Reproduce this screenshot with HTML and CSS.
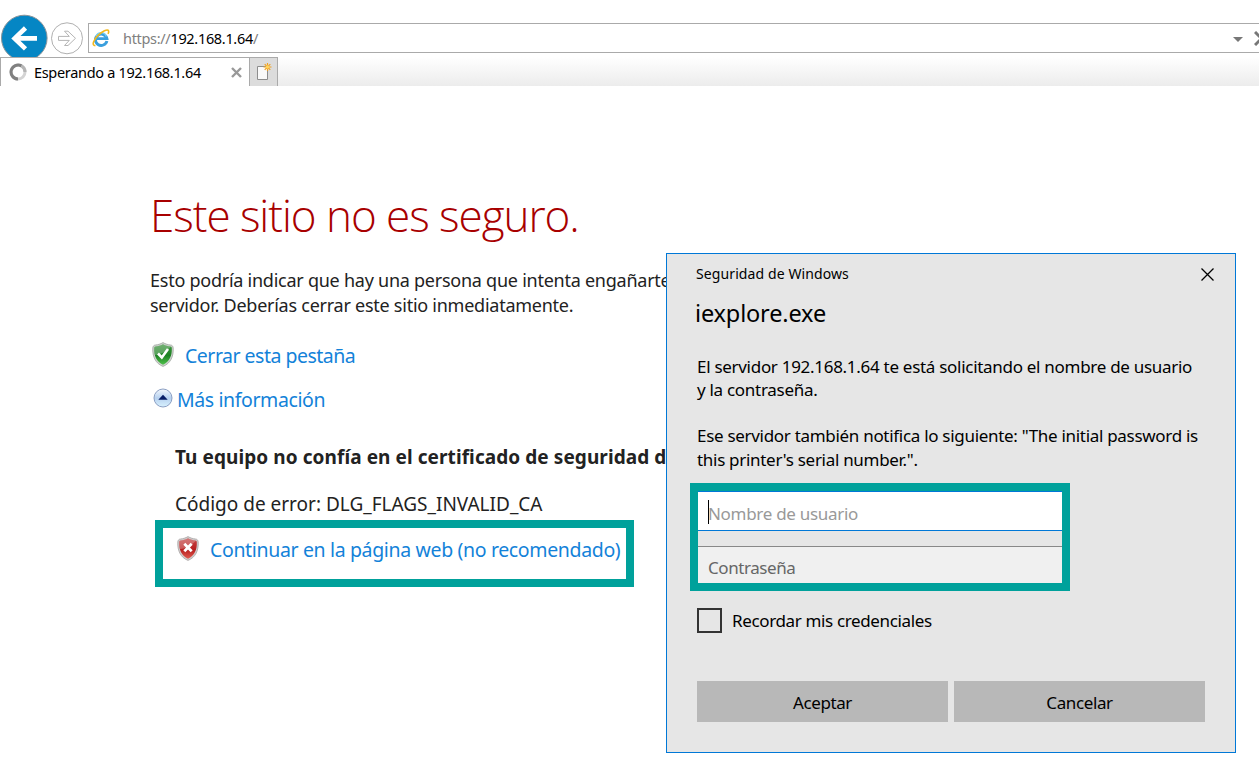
FILE: index.html
```html
<!DOCTYPE html>
<html lang="es">
<head>
<meta charset="utf-8">
<title>Este sitio no es seguro</title>
<link rel="stylesheet" href="styles.css">
</head>
<body>
<header class="chrome">
  <div class="navbar">
    <svg class="back" width="50" height="57" viewBox="0 0 50 57"><circle cx="24.3" cy="38" r="22.8" fill="#0586c4" stroke="#8b9398" stroke-width="1"/><path d="M37 38.400H15.500M25.500 28L14.600 38.400 25.500 48.800" fill="none" stroke="#fff" stroke-width="4.600"/></svg>
    <svg class="forward" width="34" height="57" viewBox="0 0 34 57"><circle cx="17" cy="38.300" r="15.500" fill="#fff" stroke="#b0b0b0"/><path d="M8.500 36.400H19.300L14.500 31.200H18L25.500 38.300 18 45.500H14.500L19.300 40.400H8.500Z" fill="#fff" stroke="#b5b5b5"/></svg>
    <div class="address">
      <svg class="ie" width="18" height="18" viewBox="0 0 18 18"><path d="M14.900 12A5.800 5.600 0 1 1 14.900 9.600H5" fill="none" stroke="#3a9fdd" stroke-width="2.900"/><path d="M14.300 7.500A5.400 5.400 0 0 0 4 7.500" fill="none" stroke="#7bd0f4" stroke-width="1.200"/><path d="M3.400 16.700C-.8 16.400 1.600 10.800 5.800 6.600 9.900 2.600 15.800-.6 16.600 1.900 16.900 2.900 16.500 4 16 4.900" fill="none" stroke="#f2b81c" stroke-width="1.600"/></svg>
      <span class="url">https://<b>192.168.1.64</b>/</span>
      <svg class="caret" width="10" height="5" viewBox="0 0 10 5"><path d="M0 0H10L5 5Z" fill="#777"/></svg>
      <svg class="stop" width="15" height="15" viewBox="0 0 15 15"><path d="M1 1L14 14M14 1L1 14" stroke="#777" stroke-width="3"/></svg>
    </div>
  </div>
  <div class="tabs">
    <div class="tab">
      <svg width="18" height="18" viewBox="0 0 18 18" fill="none" stroke-width="3"><circle cx="9" cy="9" r="7" stroke="#d4d4d4"/><path d="M9 16A7 7 0 1 1 12.500 2.900" stroke="#808080"/><path d="M12.500 2.900A7 7 0 0 1 16 9" stroke="#b5b5b5"/></svg>
      <span class="tab-title">Esperando a 192.168.1.64</span>
      <svg class="tab-close" width="11" height="11" viewBox="0 0 11 11"><path d="M1 1L10 10M10 1L1 10" stroke="#999" stroke-width="2.400"/></svg>
    </div>
    <div class="new-tab"><svg width="16" height="18" viewBox="0 0 16 18"><path d="M1.500 3.500H11.500V16.500H1.500Z" fill="#fafafa" stroke="#8d8d8d"/><path d="M11.500 0V8M7.500 4H15.500M8.700 1.200L14.300 6.800M14.300 1.200L8.700 6.800" stroke="#f0a020" stroke-width="1.200"/><circle cx="11.500" cy="4" r="1.800" fill="#ffd35a"/></svg></div>
  </div>
</header>
<main class="page">
  <h1>Este sitio no es seguro.</h1>
  <p class="intro">Esto podría indicar que hay una persona que intenta engañarte<br>servidor. Deberías cerrar este sitio inmediatamente.</p>
  <div class="action close-tab">
    <svg width="22" height="25" viewBox="0 0 22 25"><defs><linearGradient id="green" x2="0" y2="1"><stop stop-color="#3f9440"/><stop offset=".55" stop-color="#1c8222"/><stop offset="1" stop-color="#4fc24a"/></linearGradient></defs><path d="M11 .6C13.500 2 16 2.800 18.500 3 20.300 3.200 21 4.200 21.200 6 21.700 14.500 18.500 21.500 11 24.400 3.500 21.500.3 14.500.8 6 1 4.200 1.700 3.200 3.500 3 6 2.800 8.500 2 11 .6Z" fill="#cdd2cd" stroke="#a0a6a0" stroke-width=".8"/><path d="M11 2.300C13.500 3.700 16 4.400 18.400 4.500 19.400 4.600 19.700 5.200 19.800 6.300 20.200 14 17.300 20 11 22.800 4.700 20 1.800 14 2.200 6.300 2.300 5.200 2.600 4.600 3.600 4.500 6 4.400 8.500 3.700 11 2.300Z" fill="url(#green)"/><path d="M11 2.300C8.500 3.700 6 4.400 3.600 4.500 2.600 4.600 2.300 5.200 2.200 6.300 2.100 9 2.300 11 3 13 9 12.500 15 9 19 4.700 16 4.400 13.500 3.700 11 2.300Z" fill="#fff" opacity=".25"/><path d="M6 11.500L9.800 15.500 16 7" fill="none" stroke="#fff" stroke-width="2.600"/></svg>
    <a>Cerrar esta pestaña</a>
  </div>
  <div class="action more">
    <svg width="20" height="20" viewBox="0 0 20 20"><defs><linearGradient id="orb" x2="0" y2="1"><stop stop-color="#f4f8fd"/><stop offset=".5" stop-color="#b7d1ef"/><stop offset="1" stop-color="#d8f1fe"/></linearGradient></defs><circle cx="10" cy="10" r="9" fill="url(#orb)" stroke="#8b9fc3" stroke-width="1"/><path d="M5.300 11.800L10 6.800 14.700 11.800Z" fill="#071c66"/></svg>
    <a>Más información</a>
  </div>
  <p class="reason">Tu equipo no confía en el certificado de seguridad de</p>
  <p class="code">Código de error: DLG_FLAGS_INVALID_CA</p>
  <div class="highlight proceed">
    <svg width="22" height="25" viewBox="0 0 22 25"><defs><linearGradient id="red" x2="0" y2="1"><stop stop-color="#c54646"/><stop offset=".55" stop-color="#b81f1f"/><stop offset="1" stop-color="#e05a50"/></linearGradient></defs><path d="M11 .6C13.500 2 16 2.800 18.500 3 20.300 3.200 21 4.200 21.200 6 21.700 14.500 18.500 21.500 11 24.400 3.500 21.500.3 14.500.8 6 1 4.200 1.700 3.200 3.500 3 6 2.800 8.500 2 11 .6Z" fill="#d0cdcd" stroke="#a8a3a3" stroke-width=".8"/><path d="M11 2.300C13.500 3.700 16 4.400 18.400 4.500 19.400 4.600 19.700 5.200 19.800 6.300 20.200 14 17.300 20 11 22.800 4.700 20 1.800 14 2.200 6.300 2.300 5.200 2.600 4.600 3.600 4.500 6 4.400 8.500 3.700 11 2.300Z" fill="url(#red)"/><path d="M11 2.300C8.500 3.700 6 4.400 3.600 4.500 2.600 4.600 2.300 5.200 2.200 6.300 2.100 9 2.300 11 3 13 9 12.500 15 9 19 4.700 16 4.400 13.500 3.700 11 2.300Z" fill="#fff" opacity=".25"/><path d="M7.300 7.800L14.700 15.200M14.700 7.800L7.300 15.200" stroke="#fff" stroke-width="2.800"/></svg>
    <a>Continuar en la página web (no recomendado)</a>
  </div>
</main>
<section class="dialog">
  <div class="dialog-head"><span>Seguridad de Windows</span><svg width="13" height="13" viewBox="0 0 13 13"><path d="M.5 .5L12.500 12.500M12.500 .5L.5 12.500" stroke="#000" stroke-width="1.300"/></svg></div>
  <h2>iexplore.exe</h2>
  <p class="message">El servidor 192.168.1.64 te está solicitando el nombre de usuario<br>y la contraseña.</p>
  <p class="message notice">Ese servidor también notifica lo siguiente: "The initial password is<br>this printer's serial number.".</p>
  <div class="highlight fields">
    <div class="field user"><i class="cursor"></i><span>Nombre de usuario</span></div>
    <div class="field pass"><span>Contraseña</span></div>
  </div>
  <div class="remember"><i class="checkbox"></i><span>Recordar mis credenciales</span></div>
  <div class="buttons"><div class="button">Aceptar</div><div class="button">Cancelar</div></div>
</section>
</body>
</html>
```
FILE: styles.css
```css
* { box-sizing: border-box; }
body { margin: 0; width: 1259px; height: 783px; overflow: hidden; position: relative; background: #fff; color: #222; font-family: "Noto Sans", "Open Sans", sans-serif; }
h1, h2, p { margin: 0; font-weight: 400; white-space: nowrap; }
svg { display: block; flex: none; }
.chrome { height: 86px; }
.navbar { display: flex; height: 57px; }
.forward { margin-right: 4px; }
.address { flex: none; width: 1190px; height: 30px; margin-top: 23px; border: 1px solid #aaa; display: flex; align-items: center; padding-left: 3px; }
.url { width: 1110px; margin-left: 13px; font-size: 14.5px; line-height: 28px; letter-spacing: -0.32px; color: #808080; }
.url b { color: #000; font-weight: 400; }
.caret { margin-top: 2px; }
.stop { margin-left: 11px; }
.tabs { height: 29px; display: flex; background: linear-gradient(#fff, #ececec); }
.tab { width: 250px; border: solid #aaa; border-width: 1px 1px 0; background: #fff; display: flex; align-items: center; padding-left: 8px; }
.tab-title { width: 197px; margin-left: 7px; font-size: 14.5px; line-height: 28px; letter-spacing: -0.32px; color: #000; white-space: nowrap; }
.new-tab { width: 28px; background: #dcdcdc; border: solid #aaa; border-width: 1px 1px 0 0; padding: 5px 0 0 6px; }
.page { padding: 98px 0 0 150px; }
h1 { font-family: "Open Sans", "Noto Sans", sans-serif; font-weight: 300; font-size: 44px; line-height: 62px; letter-spacing: -1.04px; color: #a80000; }
.intro { margin-top: 22px; font-size: 18px; line-height: 25px; letter-spacing: -0.25px; }
.action { display: flex; height: 30px; font-size: 19.5px; line-height: 30px; color: #1382d9; letter-spacing: -0.4px; }
.close-tab { margin-top: 23px; padding-left: 2px; gap: 11px; letter-spacing: -0.5px; }
.close-tab svg { margin-top: 1px; }
.more { margin-top: 14px; padding-left: 3px; gap: 4px; }
.more svg { margin-top: 3px; }
.reason { margin: 27px 0 0 25px; font-size: 19px; line-height: 30px; font-weight: 700; letter-spacing: 0.08px; }
.code { margin: 17px 0 0 25px; font-size: 19px; line-height: 30px; }
.highlight { border: 8px solid #00a19b; }
.proceed { display: flex; width: 479px; height: 67px; margin: 1px 0 0 5px; padding: 7px 0 0 14px; gap: 11px; font-size: 19.5px; line-height: 30px; letter-spacing: -0.35px; color: #1382d9; white-space: nowrap; }
.proceed svg { margin-top: 1px; }
.dialog { position: absolute; left: 666px; top: 253px; width: 570px; height: 500px; border: 1px solid #0078d7; background: #e6e6e6; color: #000; padding: 10px 29px 0 29px; }
.dialog-head { display: flex; justify-content: space-between; height: 20px; font-size: 14px; line-height: 20px; letter-spacing: 0.1px; }
.dialog-head svg { margin: 4px -8px 0 0; }
h2 { margin: 14px 0 0 -1px; font-size: 23.5px; line-height: 30px; letter-spacing: -0.15px; }
.message { margin: 27px 0 0 1px; font-size: 17px; line-height: 23px; letter-spacing: -0.29px; }
.notice { margin-top: 23px; line-height: 24px; letter-spacing: -0.3px; }
.fields { width: 380px; height: 108px; margin: 11px 0 0 -6px; background: #e6e6e6; }
.field { font-size: 17px; padding-left: 10px; letter-spacing: -0.3px; }
.user { height: 40px; border: solid #0078d7; border-width: 1px 0; background: #fff; color: #999; line-height: 44px; display: flex; }
.cursor { width: 1px; height: 24px; background: #000; margin: 8px -1px 0 0; }
.pass { margin-top: 15px; height: 37px; border-top: 1px solid #888; background: #f0f0f0; color: #666; line-height: 42px; letter-spacing: -0.42px; }
.remember { display: flex; align-items: center; height: 24px; margin: 17px 0 0 1px; gap: 10px; font-size: 17px; letter-spacing: -0.36px; }
.checkbox { width: 25px; height: 25px; border: 2px solid #333; }
.buttons { display: flex; gap: 6px; margin: 49px 0 0 1px; }
.button { width: 251px; height: 41px; background: #b8b8b8; text-align: center; font-size: 17px; line-height: 43px; letter-spacing: -0.4px; }
```
